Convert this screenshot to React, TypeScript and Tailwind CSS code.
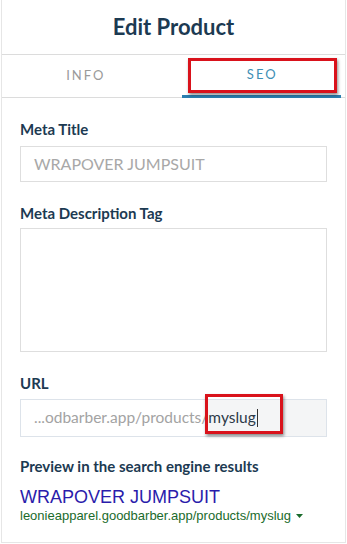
import React from "react";

export default function App() {
  return (
    <div className="w-[347px] h-[544px] bg-white overflow-hidden" style={{ fontFamily: "Lato, 'Noto Sans', sans-serif" }}>
      <div className="h-[543px] ml-[1px] mr-[1px] border-l border-r border-b border-[#e6e6e6] flex flex-col">
        <div className="h-[55px] flex items-center justify-center border-b border-[#dcdcdc]">
          <h1 className="text-[22px] font-bold text-[#1c3a52] leading-none">Edit Product</h1>
        </div>
        <div className="flex h-[43px] border-b border-[#dcdcdc] px-[4px] gap-[16px]">
          <div className="flex-1 flex items-center justify-center text-[13px] tracking-[2px] text-[#9a9a9a]">INFO</div>
          <div className="flex-1 relative flex items-center justify-center text-[13px] tracking-[2px] text-[#3f8fb5] border-b-[3px] border-[#2a7fb0] mb-[-1px]">
            <span className="pl-[2px]">SEO</span>
            <div className="absolute left-[6px] right-[4px] top-[3px] h-[35px] border-[3px] border-[#d9121b] shadow-[1px_2px_3px_rgba(0,0,0,0.45)]" />
          </div>
        </div>
        <div className="flex flex-col px-[18px] pt-[22px]">
          <label className="text-[15px] font-bold text-[#1c3a52] leading-[18px]">Meta Title</label>
          <div className="mt-[8px] h-[36px] border border-[#dedede] flex items-center px-[13px] text-[16px] text-[#a8a8a8]">
            WRAPOVER JUMPSUIT
          </div>
          <label className="mt-[22px] text-[15px] font-bold text-[#1c3a52] leading-[18px]">Meta Description Tag</label>
          <div className="mt-[6px] h-[124px] border border-[#dedede]" />
          <label className="mt-[22px] text-[15px] font-bold text-[#1c3a52] leading-[18px]">URL</label>
          <div className="mt-[7px] h-[38px] border border-[#dde3ea] flex items-stretch">
            <div className="flex items-center pl-[13px] text-[15.5px] text-[#a3a3a3] whitespace-nowrap">...odbarber.app/products/</div>
            <div className="relative flex-1 flex items-center bg-[#f4f5f6] text-[15.5px] text-[#2c3a48]">
              <span>myslug</span>
              <span className="w-[1px] h-[18px] bg-[#333] ml-[1px]" />
              <div className="absolute left-[-3px] w-[78px] top-[-6px] h-[40px] border-[3px] border-[#d9121b] shadow-[1px_2px_3px_rgba(0,0,0,0.45)]" />
            </div>
          </div>
          <label className="mt-[20px] text-[15px] font-bold text-[#1c3a52] leading-[18px]">Preview in the search engine results</label>
          <div className="mt-[12px] text-[18px] leading-[20px] text-[#2a1cab]" style={{ fontFamily: "'Liberation Sans', Arial, sans-serif" }}>
            WRAPOVER JUMPSUIT
          </div>
          <div className="mt-[1px] flex items-center text-[13px] leading-[16px] text-[#1a6b2c]" style={{ fontFamily: "'Liberation Sans', Arial, sans-serif" }}>
            leonieapparel.goodbarber.app/products/myslug
            <svg width="7" height="4" viewBox="0 0 7 4" className="ml-[5px]"><path d="M0 0h7L3.5 4z" fill="#1a6b2c" /></svg>
          </div>
        </div>
      </div>
    </div>
  );
}
